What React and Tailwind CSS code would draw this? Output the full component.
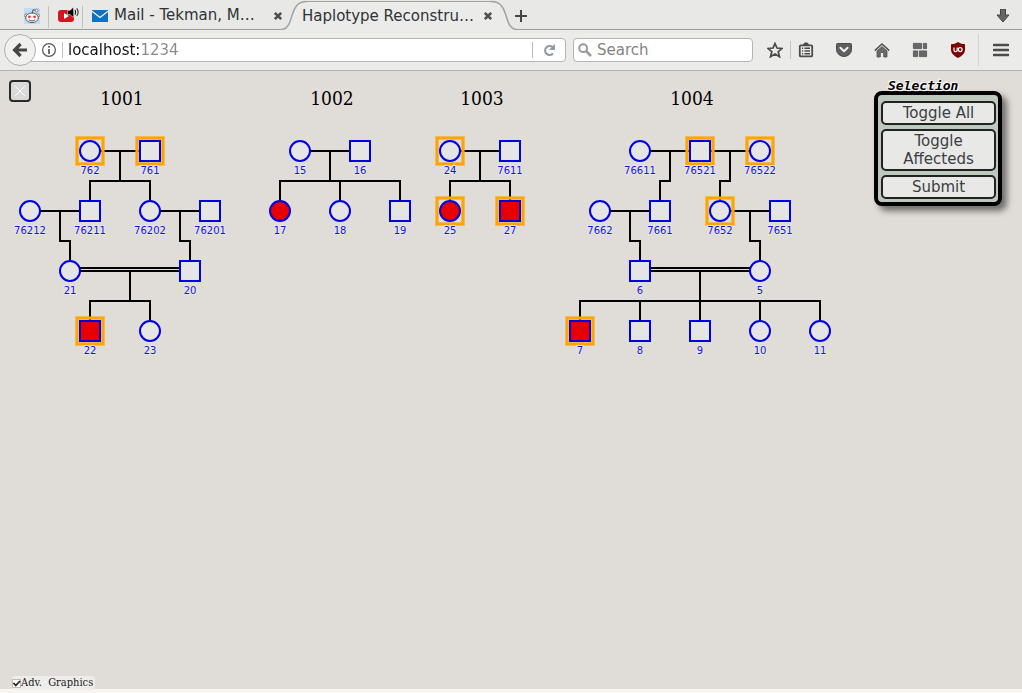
import React from "react";

const families = [
  { name: "1001", x: 122 },
  { name: "1002", x: 332 },
  { name: "1003", x: 482 },
  { name: "1004", x: 692 },
];

// id, sex, x, y, affected, selected
const people = [
  ["762", "F", 90, 80, false, true],
  ["761", "M", 150, 80, false, true],
  ["76212", "F", 30, 140, false, false],
  ["76211", "M", 90, 140, false, false],
  ["76202", "F", 150, 140, false, false],
  ["76201", "M", 210, 140, false, false],
  ["21", "F", 70, 200, false, false],
  ["20", "M", 190, 200, false, false],
  ["22", "M", 90, 260, true, true],
  ["23", "F", 150, 260, false, false],
  ["15", "F", 300, 80, false, false],
  ["16", "M", 360, 80, false, false],
  ["17", "F", 280, 140, true, false],
  ["18", "F", 340, 140, false, false],
  ["19", "M", 400, 140, false, false],
  ["24", "F", 450, 80, false, true],
  ["7611", "M", 510, 80, false, false],
  ["25", "F", 450, 140, true, true],
  ["27", "M", 510, 140, true, true],
  ["76611", "F", 640, 80, false, false],
  ["76521", "M", 700, 80, false, true],
  ["76522", "F", 760, 80, false, true],
  ["7662", "F", 600, 140, false, false],
  ["7661", "M", 660, 140, false, false],
  ["7652", "F", 720, 140, false, true],
  ["7651", "M", 780, 140, false, false],
  ["6", "M", 640, 200, false, false],
  ["5", "F", 760, 200, false, false],
  ["7", "M", 580, 260, true, true],
  ["8", "M", 640, 260, false, false],
  ["9", "M", 700, 260, false, false],
  ["10", "F", 760, 260, false, false],
  ["11", "F", 820, 260, false, false],
];

const relations = [
  "M90 80H150M120 80V110M90 140V110H150V140",
  "M30 140H90M60 140V170H70V200",
  "M150 140H210M180 140V170H190V200",
  "M70 197H190M70 200H190M130 200V230M90 260V230H150V260",
  "M300 80H360M330 80V110M280 140V110H400V140M340 110V140",
  "M450 80H510M480 80V110M450 140V110H510V140",
  "M640 80H760M670 80V110H660V140M730 80V110H720V140",
  "M600 140H660M630 140V170H640V200",
  "M720 140H780M750 140V170H760V200",
  "M640 197H760M640 200H760M700 200V260M580 260V230H820V260M640 230V260M760 230V260",
];

function Person({ person }) {
  const [id, sex, x, y, affected, selected] = person;
  const fill = affected ? "#e60000" : "#e5e5e5";
  return (
    <g>
      {selected && (
        <>
          <rect x={x - 13} y={y - 13} width="26" height="26" fill="none" stroke="#ffa500" strokeOpacity="0.45" strokeWidth="4" />
          <rect x={x - 13} y={y - 13} width="26" height="26" fill="none" stroke="#ffa500" strokeWidth="2.6" />
        </>
      )}
      {sex === "F" ? (
        <circle cx={x} cy={y} r="10" fill={fill} stroke="#0000e0" strokeWidth="2" />
      ) : (
        <rect x={x - 10} y={y - 10} width="20" height="20" fill={fill} stroke="#0000e0" strokeWidth="2" />
      )}
      <text
        x={x}
        y={y + 23}
        textAnchor="middle"
        className="fill-[#1414e0] stroke-[#e6e5e5] text-[10px] [font-family:'DejaVu_Sans',sans-serif] [paint-order:stroke]"
        strokeWidth="2"
      >
        {id}
      </text>
    </g>
  );
}

function Pedigree() {
  return (
    <svg viewBox="0 0 850 300" width="850" height="300" className="block max-w-none shrink-0" role="img" aria-label="Family pedigrees">
      {families.map((f) => (
        <text key={f.name} x={f.x} y="34" textAnchor="middle" className="fill-black text-[19px] [font-family:'DejaVu_Serif_Condensed','DejaVu_Serif',serif]">
          {f.name}
        </text>
      ))}
      <path d={relations.join("")} fill="none" stroke="#000" strokeWidth="2" />
      {people.map((p) => (
        <Person key={p[0]} person={p} />
      ))}
    </svg>
  );
}

function CloseTab({ label }) {
  return (
    <button type="button" aria-label={label} className="flex h-4 w-2.5 shrink-0 items-center justify-center">
      <svg width="10" height="10" viewBox="0 0 10 10">
        <path d="M1.8 1.8L8.2 8.2M8.2 1.8L1.8 8.2" stroke="#4a5052" strokeWidth="2.6" />
      </svg>
    </button>
  );
}

function RedditIcon() {
  return (
    <svg width="16" height="16" viewBox="0 0 16 16">
      <rect width="16" height="16" fill="#c3dcf5" />
      <path d="M8 6L9 1.8L12 2.4" fill="none" stroke="#444" strokeWidth="0.9" />
      <circle cx="12.6" cy="2.6" r="1.4" fill="#fff" stroke="#555" strokeWidth="0.7" />
      <circle cx="2.3" cy="7.6" r="1.7" fill="#fff" stroke="#555" strokeWidth="0.7" />
      <circle cx="13.7" cy="7.6" r="1.7" fill="#fff" stroke="#555" strokeWidth="0.7" />
      <ellipse cx="8" cy="9.8" rx="6.3" ry="4.8" fill="#fff" stroke="#444" strokeWidth="0.9" />
      <circle cx="5.4" cy="8.8" r="1.4" fill="#f33" />
      <circle cx="10.6" cy="8.8" r="1.4" fill="#f33" />
      <path d="M4.8 11.8Q8 14.2 11.2 11.8" fill="none" stroke="#444" strokeWidth="0.9" />
    </svg>
  );
}

function VideoIcon() {
  return (
    <svg width="22" height="18" viewBox="0 0 22 18">
      <rect x="0" y="4" width="16" height="12" rx="3" fill="#d3171e" />
      <path d="M6 7V13L11 10Z" fill="#fff" />
      <path d="M9.5 4.5H12L15.5 1V11.5L12 8.5H9.5Z" fill="#000" stroke="#fff" strokeWidth="0.5" />
      <path d="M17 4Q18.4 6.2 17 8.6" fill="none" stroke="#111" strokeWidth="1.2" />
      <path d="M18.7 2.4Q21.6 6.2 18.7 10" fill="none" stroke="#333" strokeWidth="1.1" />
    </svg>
  );
}

function TabBar() {
  return (
    <div className="flex h-[30px] shrink-0 items-stretch bg-[#e8e8e7] text-[15px] text-[#2e3436]">
      <div className="flex items-center border-b border-[#9c9e9a]">
        <button type="button" aria-label="Reddit" className="flex h-full w-12 items-center justify-end pt-0.5 pr-2">
          <RedditIcon />
        </button>
        <span className="mt-1 h-[22px] w-px bg-[#c2c2c0]" />
        <button type="button" aria-label="Video, playing sound" className="flex h-full w-[33px] items-start justify-end pt-1.5 pr-0.5">
          <VideoIcon />
        </button>
        <span className="mt-1 h-[22px] w-px bg-[#c2c2c0]" />
        <button type="button" className="ml-[9px] flex h-full items-center gap-1.5 pt-0.5">
          <svg width="16" height="12" viewBox="0 0 16 12">
            <rect width="16" height="12" fill="#0b72c6" />
            <path d="M0 1.2L8 7.4L16 1.2" fill="none" stroke="#f2f6fa" strokeWidth="1.3" />
          </svg>
          <span className="w-[156px] truncate text-left">Mail - Tekman, M…</span>
        </button>
        <div className="flex w-[19px] items-center pt-0.5 pl-[3px]">
          <CloseTab label="Close Mail" />
        </div>
      </div>
      <div className="flex">
        <svg width="26" height="30" viewBox="0 0 26 30" className="-ml-2">
          <path d="M0 29.5C8 29.5 9.500 20 11.500 14S16 1.500 26 1.500V30H0Z" fill="#ebebea" />
          <path d="M0 29.500C8 29.500 9.500 20 11.500 14S16 1.500 26 1.500" fill="none" stroke="#a0a2a6" strokeWidth="1.500" />
        </svg>
        <div className="mt-px flex items-center border-t border-[#a0a2a6] bg-[#ebebea]">
          <button type="button" className="-ml-[5px] w-[181px] text-left">Haplotype Reconstru…</button>
          <CloseTab label="Close Haplotype Reconstruction" />
        </div>
        <svg width="26" height="30" viewBox="0 0 26 30" className="-ml-0.5">
          <path d="M26 29.500C18 29.500 16.500 20 14.500 14S10 1.500 2 1.500V30H26Z" fill="#ebebea" />
          <path d="M26 29.500C18 29.500 16.500 20 14.500 14S10 1.500 0 1.500" fill="none" stroke="#a0a2a6" strokeWidth="1.500" />
        </svg>
      </div>
      <div className="flex flex-1 items-center justify-between border-b border-[#9c9e9a] pt-0.5 pr-3">
        <button type="button" aria-label="New tab" className="-ml-0.5">
          <svg width="12" height="12" viewBox="0 0 12 12">
            <path d="M6 0V12M0 6H12" stroke="#444746" strokeWidth="2" />
          </svg>
        </button>
        <button type="button" aria-label="Downloads">
          <svg width="14" height="14" viewBox="0 0 14 14">
            <path d="M4.500 0H9.500V6H13L7 13L1 6H4.500Z" fill="#666" stroke="#444" strokeLinejoin="round" />
          </svg>
        </button>
      </div>
    </div>
  );
}

function ToolButton({ label, children }) {
  return (
    <button type="button" aria-label={label} className="flex size-4 shrink-0 items-center justify-center">
      <svg width="16" height="16" viewBox="0 0 16 16">{children}</svg>
    </button>
  );
}

function NavBar() {
  return (
    <div className="flex h-[41px] shrink-0 items-center border-b border-[#b3b3b1] bg-[#ebebea] pr-[13px] text-[15px]">
      <div className="flex min-w-0 flex-1 items-center">
        <button type="button" aria-label="Back" className="z-10 ml-1 flex size-8 shrink-0 items-center justify-center rounded-full border border-[#aeaeac] bg-[#f1f1f0]">
          <svg width="16" height="16" viewBox="0 0 16 16">
            <path d="M8.600 2L2.600 8L8.600 14M3.500 8H15" fill="none" stroke="#464646" strokeWidth="3.200" />
          </svg>
        </button>
        <div className="-ml-2 flex h-6 min-w-0 flex-1 items-center rounded-r-sm border border-[#b4b4b2] bg-white pl-3">
          <button type="button" aria-label="Site information" className="shrink-0">
            <svg width="16" height="16" viewBox="0 0 16 16">
              <circle cx="8" cy="8" r="6.400" fill="none" stroke="#555" strokeWidth="1.200" />
              <path d="M8 7V12M8 4V5.800" stroke="#555" strokeWidth="1.700" />
            </svg>
          </button>
          <span className="ml-[5px] h-4 w-px shrink-0 bg-[#c0c0be]" />
          <input
            aria-label="Address"
            defaultValue="localhost:1234"
            className="ml-[5px] min-w-0 flex-1 bg-[linear-gradient(to_right,#111_72px,#888_72px)] bg-clip-text text-transparent outline-none"
          />
          <span className="h-4 w-px shrink-0 bg-[#b8b8b6]" />
          <button type="button" aria-label="Reload" className="flex w-8 shrink-0 justify-center">
            <svg width="13" height="14" viewBox="0 0 13 14">
              <path d="M10 10.500A4.500 4.500 0 1 1 9.500 4" fill="none" stroke="#8d99a5" strokeWidth="2.200" />
              <path d="M12 1V7H6Z" fill="#8d99a5" />
            </svg>
          </button>
        </div>
      </div>
      <label className="ml-[7px] flex h-6 w-[180px] shrink-0 items-center rounded-sm border border-[#b4b4b2] bg-white pl-1">
        <svg width="14" height="14" viewBox="0 0 14 14" className="shrink-0">
          <circle cx="5.200" cy="5.200" r="3.900" fill="none" stroke="#999" strokeWidth="2" />
          <path d="M8.200 8.200L13 13" stroke="#999" strokeWidth="2.500" />
        </svg>
        <input aria-label="Search" placeholder="Search" className="ml-[5px] w-full min-w-0 outline-none placeholder:text-[#838383]" />
      </label>
      <div className="ml-3.5 flex items-center">
        <ToolButton label="Bookmark this page">
          <path d="M8 1.500L10 6L15 6.400L11.200 9.700L12.500 14.700L8 12L3.500 14.700L4.800 9.700L1 6.400L6 6Z" fill="none" stroke="#4a4a4a" strokeWidth="1.700" />
        </ToolButton>
        <span className="ml-[7px] h-[18px] w-px bg-[#c4c4c2]" />
        <div className="ml-[7px] flex items-center gap-[22px]">
          <ToolButton label="Bookmarks">
            <path d="M5.500 3V2H6.500V1H9.500V2H10.500V3" fill="#4c4c4c" stroke="#4c4c4c" />
            <rect x="1.800" y="3.400" width="12.400" height="11" rx="1" fill="#ebebea" stroke="#4c4c4c" strokeWidth="1.800" />
            <path d="M4 6.200H5.200M4 9H5.200M4 11.800H5.200M6.500 6.200H12M6.500 9H12M6.500 11.800H12" stroke="#4c4c4c" strokeWidth="1.400" />
          </ToolButton>
          <ToolButton label="Pocket">
            <path d="M1.500 1.500H14.500Q15.500 1.500 15.500 2.500V7.500A7.500 7 0 0 1 0.500 7.500V2.500Q0.500 1.500 1.500 1.500Z" fill="#5f5f5f" stroke="#4c4c4c" />
            <path d="M4.400 5.800L8 9.200L11.600 5.800" fill="none" stroke="#f2f2f2" strokeWidth="2" strokeLinecap="round" strokeLinejoin="round" />
          </ToolButton>
          <ToolButton label="Home">
            <path d="M3 9L8 4.600L13 9V15H9.700V10.500H6.300V15H3Z" fill="#6a6a6a" stroke="#4e4e4e" strokeWidth="0.800" />
            <path d="M0.800 8.600L8 2L15.200 8.600" fill="none" stroke="#4e4e4e" strokeWidth="1.500" />
          </ToolButton>
          <ToolButton label="Tiles">
            <g fill="#686868" stroke="#505050" strokeWidth="0.800">
              <path d="M1.400 1.400H9.600V6.600H1.400ZM11.400 1.400H14.600V6.600H11.400ZM1.400 8.900H5.600V14.600H1.400ZM7.400 8.900H14.600V14.600H7.400Z" />
            </g>
          </ToolButton>
          <ToolButton label="Content blocker">
            <path d="M8 0Q11 2.200 15 2.200V8Q15 12.500 8 16Q1 12.500 1 8V2.200Q5 2.200 8 0Z" fill="#800000" />
            <path d="M4 5.500V8.200Q4 9.600 5.600 9.600T7.200 8.200V5.500" fill="none" stroke="#fff" strokeWidth="1.200" />
            <ellipse cx="10.200" cy="7.600" rx="1.900" ry="2" fill="none" stroke="#fff" strokeWidth="1.200" />
          </ToolButton>
        </div>
        <span className="ml-3 h-8 w-px bg-[#d2d2d0]" />
        <button type="button" aria-label="Menu" className="ml-3.5">
          <svg width="16" height="14" viewBox="0 0 16 14">
            <path d="M1 2H15M1 7H15M1 12H15" stroke="#4c4c4c" strokeWidth="2.600" strokeLinecap="round" />
          </svg>
        </button>
      </div>
    </div>
  );
}

function PanelButton({ children }) {
  return (
    <button type="button" className="rounded-[5px] border-2 border-[#222] bg-[#e8e8e7] px-2 py-px text-[15px] leading-[18px] text-[#3a4042]">
      {children}
    </button>
  );
}

function SelectionPanel() {
  return (
    <section aria-labelledby="selection-title" className="absolute top-2 right-5 w-32">
      <h2
        id="selection-title"
        className="h-3 pl-3.5 text-[13px] leading-[14px] font-bold italic text-black [font-family:'DejaVu_Sans_Mono',monospace] [text-shadow:0_0_2px_#fff,1px_1px_1px_#fff,-1px_-1px_1px_#fff]"
      >
        Selection
      </h2>
      <div className="flex flex-col gap-1 rounded-lg border-4 border-black bg-[#bdc9bd] pt-1.5 pr-0.5 pb-[3px] pl-[3px] shadow-[5px_5px_6px_#00000080]">
        <PanelButton>Toggle All</PanelButton>
        <PanelButton>Toggle Affecteds</PanelButton>
        <PanelButton>Submit</PanelButton>
      </div>
    </section>
  );
}

export default function App() {
  return (
    <div className="flex min-h-screen flex-col bg-[#f8f4f0] [font-family:'DejaVu_Sans',sans-serif]">
      <header>
        <TabBar />
        <NavBar />
      </header>
      <main className="relative mb-1 flex flex-1 flex-col justify-between bg-[#e0ddd8]">
        <Pedigree />
        <button type="button" aria-label="Close" className="absolute top-[9px] left-[9px] flex size-[22px] items-center justify-center rounded border-2 border-[#2a2a2a] bg-[#dadada]">
          <svg width="12" height="12" viewBox="0 0 12 12">
            <path d="M1 1L11 11M11 1L1 11" stroke="#fff" strokeWidth="1" />
          </svg>
        </button>
        <SelectionPanel />
        <label className="-mb-px ml-3 flex h-3.5 items-center self-start rounded-sm bg-[#ededec] pr-0.5 text-[11px] leading-4 text-[#222] [font-family:'DejaVu_Serif_Condensed','DejaVu_Serif',serif]">
          <span className="grid size-[9px] place-items-center">
            <input type="checkbox" defaultChecked className="peer col-start-1 row-start-1 size-[9px] appearance-none border border-[#bbb] bg-white" />
            <svg width="9" height="9" viewBox="0 0 9 9" className="pointer-events-none invisible col-start-1 row-start-1 peer-checked:visible">
              <path d="M1.500 4L3.800 6.500L8 2" fill="none" stroke="#222" strokeWidth="1.800" />
            </svg>
          </span>
          <span className="whitespace-pre">Adv.  Graphics</span>
        </label>
      </main>
    </div>
  );
}
